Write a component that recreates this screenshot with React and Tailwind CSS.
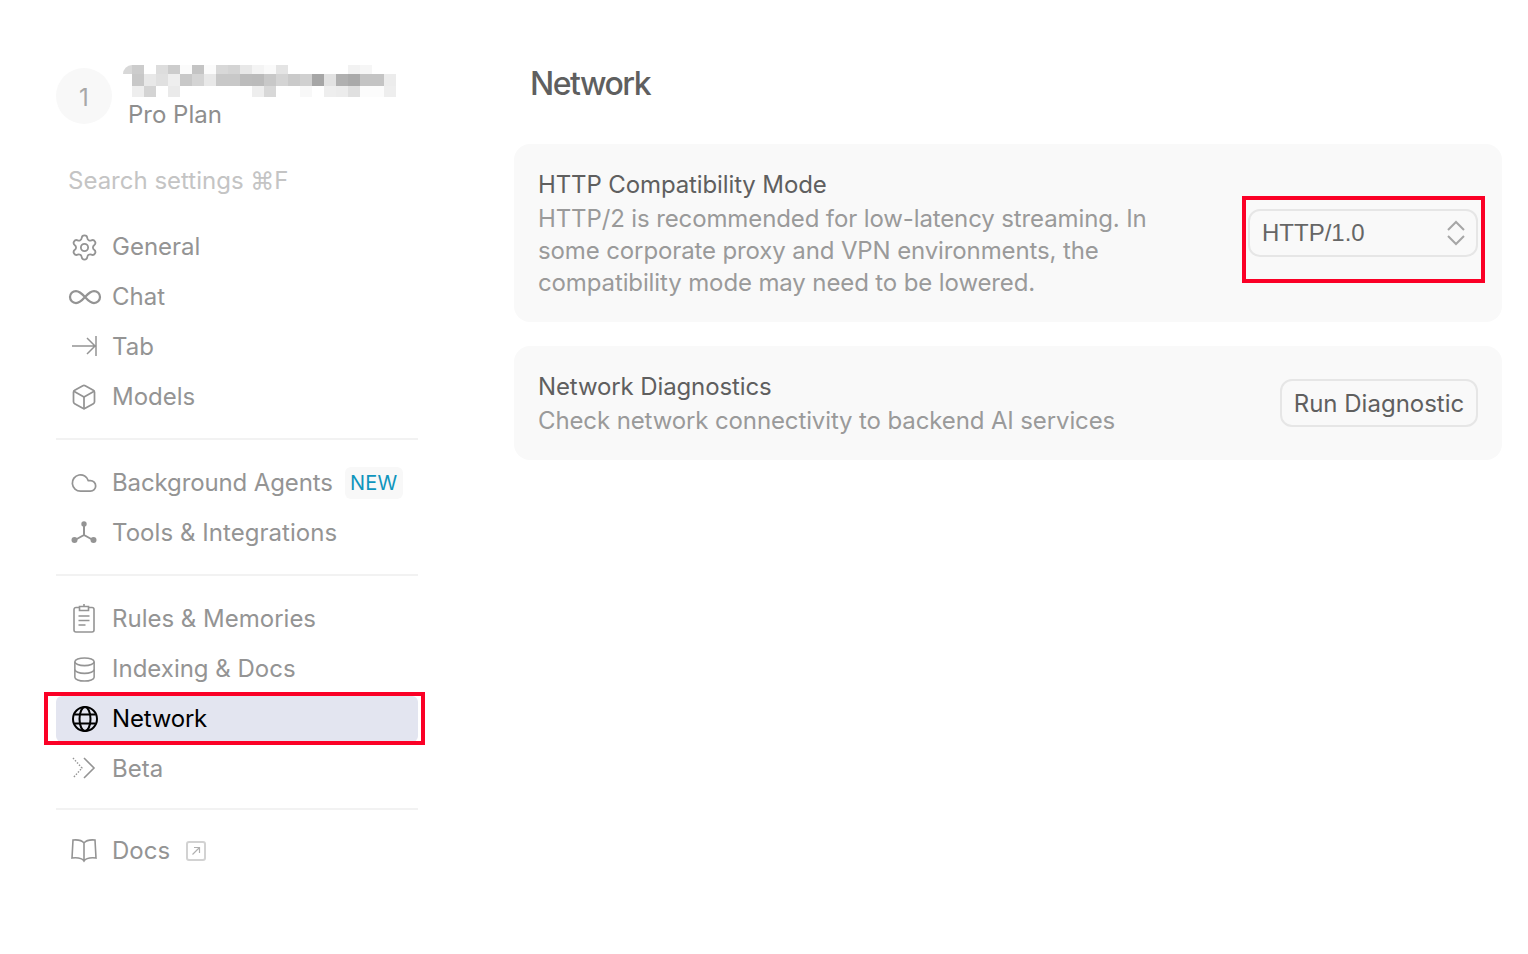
import { Settings, Infinity as InfinityIcon, Box, Cloud } from 'lucide-react'

const mosaic = [
  ['#d8d8d8','#ccc','#fff','#ddd','#ccc','#fbfbfb','#c4c4c4','#fbfbfb','#d8d8d8','#d4d4d4','#e8e8e8','#f4f4f4','#fafafa','#e4e4e4','#fff','#fff','#fff','#fff','#fff','#f2f2f2','#f6f6f6','#fff','#fff'],
  ['#fff','#c8c8c8','#e8e8e8','#e0e0e0','#eee','#c8c8c8','#d4d4d4','#e8e8e8','#c8c8c8','#c8c8c8','#bcbcbc','#bbb','#c8c8c8','#d4d4d4','#cacaca','#d0d0d0','#a6a6a6','#e2e2e2','#b0b0b0','#aaa','#c4c4c4','#c4c4c4','#ececec'],
  ['#fff','#eee','#d4d4d4','#fff','#eaeaea','#fff','#fff','#fff','#fff','#fff','#fff','#eee','#d8d8d8','#fff','#fff','#f8f8f8','#fff','#eee','#ececec','#e0e0e0','#fcfcfc','#fcfcfc','#eee'],
]
const rowHeights = ['h-[9px]', 'h-[12px]', 'h-[11px]']

function Item({ icon: Icon, label, active, iconClass, labelClass, children }) {
  return (
    <div className={active ? 'relative flex h-[46px] items-center rounded-md bg-[#e3e5f0] pl-[14px] text-black' : 'flex h-[46px] items-center pl-[14px] text-[#949494]'}>
      <span className="flex h-[28px] w-[28px] shrink-0 items-center justify-center">
        <Icon className={iconClass || 'h-[28px] w-[28px] shrink-0'} strokeWidth={1.5} />
      </span>
      <span className={'ml-[14px] text-[24px] leading-none ' + (labelClass || '')}>{label}</span>
      {children}
      {active && <div className="absolute -left-3 -right-[7px] -top-1 -bottom-[3px] border-4 border-[#fb0026]" />}
    </div>
  )
}

function TabIcon({ className }) {
  return (
    <svg viewBox="0 0 28 28" fill="none" stroke="currentColor" strokeWidth="1.500" className={className}>
      <path d="M2 13h23M17 5l8 8-8 8M26 3v20" />
    </svg>
  )
}

function ToolsIcon({ className }) {
  return (
    <svg viewBox="0 0 28 28" fill="currentColor" stroke="currentColor" className={className}>
      <path d="M14 6v10M14 16l-9 5M14 16l9 5" fill="none" strokeWidth="2" />
      <circle cx="14" cy="5" r="2.700" stroke="none" />
      <circle cx="4.500" cy="21" r="3" stroke="none" />
      <circle cx="23.500" cy="21" r="3" stroke="none" />
    </svg>
  )
}

function RulesIcon({ className }) {
  return (
    <svg viewBox="0 0 28 28" fill="none" stroke="currentColor" strokeWidth="1.600" className={className}>
      <path d="M9.500 3.500H6a2 2 0 0 0-2 2V26a2 2 0 0 0 2 2h16a2 2 0 0 0 2-2V5.500a2 2 0 0 0-2-2h-3.500" transform="translate(0 -1)" />
      <path d="M9.500 1.500h9v4h-9zM14 1.500V-1" />
      <path d="M8.500 11h11M8.500 15.500h11M8.500 20h7" strokeWidth="1.300" />
    </svg>
  )
}

function DatabaseIcon({ className }) {
  return (
    <svg viewBox="0 0 28 28" fill="none" stroke="currentColor" strokeWidth="1.600" className={className}>
      <ellipse cx="14" cy="6" rx="10" ry="4" />
      <path d="M4 6v16c0 2.200 4.500 4 10 4s10-1.800 10-4V6" />
      <path d="M4 14c0 2.200 4.500 4 10 4s10-1.800 10-4" />
    </svg>
  )
}

function GlobeIcon({ className }) {
  return (
    <svg viewBox="0 0 28 28" fill="none" stroke="currentColor" strokeWidth="2" className={className}>
      <circle cx="14" cy="14" r="12" />
      <ellipse cx="14" cy="14" rx="5.500" ry="12" />
      <path d="M3.500 9.500h21M3.500 18.500h21" />
    </svg>
  )
}

function BetaIcon({ className }) {
  return (
    <svg viewBox="0 0 28 28" fill="none" stroke="currentColor" className={className}>
      <path d="M3 3l9 10-9 10" strokeWidth="1.400" strokeDasharray="1.500 1.500" />
      <path d="M14 3l10 10-10 10" strokeWidth="1.600" />
    </svg>
  )
}

function BookIcon({ className }) {
  return (
    <svg viewBox="0 0 28 28" fill="none" stroke="currentColor" strokeWidth="1.600" className={className}>
      <path d="M14 6C12 3.500 8 2.500 3 3l-1 18c5-.5 10 0 12 3 2-3 7-3.500 12-3L25 3c-5-.5-9 .5-11 3zM14 6v18" />
    </svg>
  )
}

function Divider({ last }) {
  return <div className={last ? 'mb-[18px] mt-[16px] h-[2px] bg-[#f2f2f2]' : 'mb-[20px] mt-[18px] h-[2px] bg-[#f2f2f2]'} />
}

export default function App() {
  return (
    <main className="flex min-h-[954px] bg-white font-['Inter',sans-serif]">
      <aside className="ml-[56px] w-[362px] shrink-0 pt-[65px]">
        <div className="flex">
          <div className="mt-[3px] flex h-[56px] w-[56px] items-center justify-center rounded-full bg-[#f8f8f8] pt-[3px] text-[24px] text-[#a8a8a8]">1</div>
          <div className="ml-[12px]">
            <div className="-ml-[1px] flex flex-col">
              {mosaic.map((row, i) => (
                <div key={i} className={'flex ' + rowHeights[i]}>
                  {row.map((c, j) => (
                    <div key={j} className={j === 0 ? 'h-full w-[9px] rounded-tl-[9px]' : 'h-full w-[12px]'} style={{ backgroundColor: c }} />
                  ))}
                </div>
              ))}
            </div>
            <div className="ml-[4px] mt-[3px] text-[24px] leading-[30px] text-[#8e8e8e]">Pro Plan</div>
          </div>
        </div>

        <div className="ml-[12px] mt-[36px] text-[24px] leading-[30px] text-[#c4c4c4]">Search settings ⌘F</div>

        <nav className="mt-[28px] flex flex-col">
          <div className="flex flex-col gap-[4px]">
            <Item icon={Settings} label="General" iconClass="h-[29px] w-[29px] shrink-0" />
            <Item icon={InfinityIcon} label="Chat" iconClass="ml-[1px] h-[36px] w-[36px] shrink-0" />
            <Item icon={TabIcon} label="Tab" iconClass="h-[28px] w-[28px] shrink-0" />
            <Item icon={Box} label="Models" />
          </div>
          <Divider />
          <div className="flex flex-col gap-[4px]">
            <Item icon={Cloud} label="Background Agents" labelClass="tracking-[-0.12px]">
              <span className="ml-[12px] flex h-[32px] w-[58px] items-center justify-center rounded-md bg-[#f8f8f8] text-[20px] tracking-[0.3px] text-[#0f95bd]">NEW</span>
            </Item>
            <Item icon={ToolsIcon} label="Tools & Integrations" labelClass="tracking-[0.05px]" iconClass="h-[28px] w-[28px] shrink-0" />
          </div>
          <Divider />
          <div className="flex flex-col gap-[4px]">
            <Item icon={RulesIcon} label="Rules & Memories" iconClass="h-[28px] w-[28px] shrink-0 overflow-visible" />
            <Item icon={DatabaseIcon} label="Indexing & Docs" iconClass="h-[27px] w-[27px] shrink-0" />
            <Item icon={GlobeIcon} label="Network" labelClass="tracking-[-0.2px]" active iconClass="ml-[1px] h-[28px] w-[28px] shrink-0" />
            <Item icon={BetaIcon} label="Beta" iconClass="h-[28px] w-[28px] shrink-0" />
          </div>
          <Divider last />
          <Item icon={BookIcon} label="Docs" iconClass="h-[28px] w-[28px] shrink-0">
            <span className="ml-[16px] flex h-[20px] w-[20px] items-center justify-center rounded-[3px] border-2 border-[#d2d2d2] text-[#b0b0b0]">
              <svg viewBox="0 0 12 12" className="h-[12px] w-[12px]" fill="none" stroke="currentColor" strokeWidth="1.200"><path d="M2.500 9.500l7-7M4 2.500h5.500V8" /></svg>
            </span>
          </Item>
        </nav>
      </aside>

      <section className="ml-[96px] mr-[26px] flex-1 pt-[65px]">
        <h1 className="ml-[16px] text-[32px] font-medium leading-[38px] tracking-[-1.5px] text-[#5f5f5f]">Network</h1>

        <div className="mt-[41px] flex h-[178px] items-center justify-between rounded-[16px] bg-[#f9f9f9] px-[24px]">
          <div className="self-start pt-[25px] text-[24px] leading-[32px] tracking-[-0.12px]">
            <div className="text-[#5f5f5f]">HTTP Compatibility Mode</div>
            <div className="mt-[2px] w-[640px] text-[#9a9a9a]">HTTP/2 is recommended for low-latency streaming. In some corporate proxy and VPN environments, the compatibility mode may need to be lowered.</div>
          </div>
          <div className="relative flex h-[48px] w-[230px] items-center justify-between rounded-[12px] border-2 border-[#e6e6e6] pl-[12px] pr-[11px] font-['Liberation_Sans',sans-serif] text-[24px] text-[#666]">
            <span>HTTP/1.0</span>
            <svg viewBox="0 0 18 28" className="h-[28px] w-[18px]" fill="none" stroke="#a6a6a6" strokeWidth="2">
              <path d="M1 11l8-8 8 8M1 17l8 8 8-8" />
            </svg>
            <div className="absolute -left-[8px] -right-[9px] -top-[15px] -bottom-[28px] border-4 border-[#fb0026]" />
          </div>
        </div>

        <div className="mt-[24px] flex h-[114px] items-center justify-between rounded-[16px] bg-[#f9f9f9] px-[24px]">
          <div className="pt-[1px] text-[24px] leading-[34px] tracking-[-0.12px]">
            <div className="text-[#5f5f5f]">Network Diagnostics</div>
            <div className="text-[#9a9a9a]">Check network connectivity to backend AI services</div>
          </div>
          <button className="flex h-[48px] w-[198px] items-center justify-center rounded-[12px] border-2 border-[#e6e6e6] pt-[1px] text-[24px] text-[#5f5f5f]">Run Diagnostic</button>
        </div>
      </section>
    </main>
  )
}
